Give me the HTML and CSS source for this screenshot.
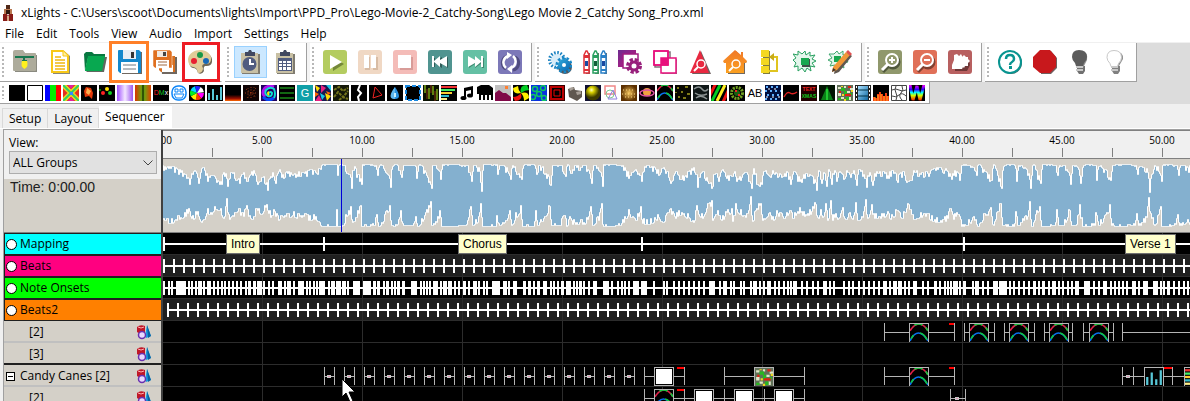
FILE: index.html
```html
<!DOCTYPE html>
<html lang="en">
<head>
<meta charset="utf-8">
<title>xLights</title>
<link rel="stylesheet" href="styles.css">
</head>
<body>
<svg class="defs" aria-hidden="true">
  <defs>
    <linearGradient id="g-purple"><stop offset="0" stop-color="#a050ff"/><stop offset=".5" stop-color="#f4e8ff"/><stop offset="1" stop-color="#9c58f0"/></linearGradient>
    <linearGradient id="g-curtain"><stop offset="0" stop-color="#e03000"/><stop offset=".4" stop-color="#70a010"/><stop offset=".5" stop-color="#103000"/><stop offset=".6" stop-color="#70a010"/><stop offset="1" stop-color="#e04000"/></linearGradient>
    <linearGradient id="g-fire" x2="0" y2="1"><stop offset=".3" stop-color="#000"/><stop offset=".75" stop-color="#a01000"/><stop offset="1" stop-color="#ff6a00"/></linearGradient>
    <linearGradient id="g-rain" x2="0" y2="1"><stop offset="0" stop-color="#f0f"/><stop offset=".3" stop-color="#30f"/><stop offset=".5" stop-color="#0ff"/><stop offset=".7" stop-color="#cf0"/><stop offset="1" stop-color="#f30"/></linearGradient>
    <linearGradient id="g-cog" x2="1" y2="1"><stop offset="0" stop-color="#2fa8d8"/><stop offset="1" stop-color="#0a68b4"/></linearGradient>
    <linearGradient id="g-plum" x2="1" y2="1"><stop offset="0" stop-color="#6c2c90"/><stop offset="1" stop-color="#c8187c"/></linearGradient>
    <linearGradient id="g-house" x2="0" y2="1"><stop offset="0" stop-color="#f07828"/><stop offset="1" stop-color="#fba020"/></linearGradient>
    <radialGradient id="g-ball" cx=".4" cy=".3"><stop offset="0" stop-color="#ffffc0"/><stop offset=".35" stop-color="#d8d000"/><stop offset="1" stop-color="#3c3a00"/></radialGradient>
    <radialGradient id="g-gold"><stop offset="0" stop-color="#f8c860"/><stop offset="1" stop-color="#5c3000"/></radialGradient>
    <linearGradient id="g-film" x2="1" y2="1"><stop offset="0" stop-color="#a8e0ff"/><stop offset="1" stop-color="#1068a0"/></linearGradient>
  </defs>
  <symbol id="fx-off" viewBox="0 0 16 16"><path d="M0 0h16v16H0z"/></symbol>
  <symbol id="fx-on" viewBox="0 0 16 16"><path d="M.5.5h15v15H.5z" fill="#fff" stroke="#000"/></symbol>
  <symbol id="fx-bars" viewBox="0 0 16 16"><path d="M0 0h6v16H0z" fill="#00f"/><path d="M5 0h6v16H5z" fill="#0e0"/><path d="M11 0h5v16h-5z" fill="#f00"/></symbol>
  <symbol id="fx-butterfly" viewBox="0 0 16 16"><path d="M0 0h16v16H0z" fill="#e43020"/><path d="M0 0l16 16M16 0L0 16" stroke="#e8d820" stroke-width="5"/><path d="M0 0l16 16M16 0L0 16" stroke="#30d060" stroke-width="2"/><path d="M5 0h6L8 4zM5 16h6l-3-4z" fill="#e020a0"/><path d="M7 7h3v3H7z" fill="#38f"/></symbol>
  <symbol id="fx-candle" viewBox="0 0 16 16"><path d="M0 0h16v16H0z"/><path d="M5 2l5 1 2 5-1 6-3-3-4 1-1-6z" fill="#e43808"/><path d="M6 3l4 3-2 4-3-2z" fill="#ffb050"/></symbol>
  <symbol id="fx-circles" viewBox="0 0 16 16"><path d="M0 0h16v16H0z"/><circle cx="8" cy="4" r="2" fill="#fd0"/><circle cx="4" cy="8" r="2" fill="#f22"/><circle cx="11" cy="8" r="2" fill="#1c2"/><circle cx="1" cy="5" r="1" fill="#0a0"/></symbol>
  <symbol id="fx-wash" viewBox="0 0 16 16"><path d="M0 0h16v16H0z" fill="url(#g-purple)"/></symbol>
  <symbol id="fx-curtain" viewBox="0 0 16 16"><path d="M0 0h16v16H0z" fill="url(#g-curtain)"/></symbol>
  <symbol id="fx-face" viewBox="0 0 16 16"><rect x="1" y="1" width="14" height="14" rx="6" fill="#fff" stroke="#0a84f8" stroke-width="1.500"/><path d="M4 4h3v3H4zM9 4h3v3H9zM3 9h10l-2 4H5z" fill="none" stroke="#0a84f8"/></symbol>
  <symbol id="fx-fan" viewBox="0 0 16 16"><path d="M0 0h16v16H0z"/><g stroke-width="7" fill="none" stroke-dasharray="3 19"><circle cx="8" cy="8" r="3.500" stroke="#f0f"/><circle cx="8" cy="8" r="3.500" stroke="#f30" stroke-dashoffset="-3"/><circle cx="8" cy="8" r="3.500" stroke="#fe0" stroke-dashoffset="-6"/><circle cx="8" cy="8" r="3.500" stroke="#0e2" stroke-dashoffset="-9"/><circle cx="8" cy="8" r="3.500" stroke="#0df" stroke-dashoffset="-12"/><circle cx="8" cy="8" r="3.500" stroke="#22f" stroke-dashoffset="-15"/><circle cx="8" cy="8" r="3.500" stroke="#fff" stroke-dashoffset="-18"/></g></symbol>
  <symbol id="fx-vu" viewBox="0 0 16 16"><path d="M0 0h16v16H0z"/><path d="M1 8h2v7H1zM5 4h2v11H5zM9 10h2v5H9zM13 2h2v13h-2z" fill="#58c8d8"/></symbol>
  <symbol id="fx-fire" viewBox="0 0 16 16"><path d="M0 0h16v16H0z"/><path d="M0 9l3-2 3 3 3-2 3-1 4 2v7H0z" fill="url(#g-fire)"/></symbol>
  <symbol id="fx-fireworks" viewBox="0 0 16 16"><path d="M0 0h16v16H0z" fill="#100404"/><path d="M8 2v12M3 4l10 8M13 3L4 13M2 8h12" stroke="#a03818" stroke-dasharray="1 1.500"/><path d="M5 3v10M11 2v12" stroke="#683010" stroke-dasharray="1 2"/></symbol>
  <symbol id="fx-galaxy" viewBox="0 0 16 16"><path d="M0 0h16v16H0z" fill="#200060"/><path d="M4 12Q0 8 4 3q4-3 9-1" fill="none" stroke="#b010f0" stroke-width="3"/><path d="M2 12q5 5 11 1" fill="none" stroke="#0448f8" stroke-width="3"/><path d="M8 8q2-2 3 0 0 4-4 3-4-2-2-6 4-4 8-1 2 5 0 9" fill="none" stroke="#0ce0d0" stroke-width="2"/><path d="M8 7q-2 1 0 3" stroke="#fe0" stroke-width="2" fill="none"/></symbol>
  <symbol id="fx-garland" viewBox="0 0 16 16"><path d="M0 0h16v16H0z"/><path d="M1 3h14M1 8h14M1 13h14" stroke="#188818" stroke-width="1.500"/></symbol>
  <symbol id="fx-kaleido" viewBox="0 0 16 16"><path d="M0 0h16v16H0z" fill="#181850"/><path d="M0 0l5 3-3 4zM10 8l6 3-4 5z" fill="#fd0"/><path d="M6 0l5 3-5 5zM0 16l4-6 3 6z" fill="#e82080"/><path d="M11 0h5v6zM5 8l5 3-3 4z" fill="#18c8e8"/><path d="M0 7l4 2-4 3zM11 6l5 2-3 2z" fill="#f60"/></symbol>
  <symbol id="fx-life" viewBox="0 0 16 16"><path d="M0 0h16v16H0z" fill="#141808"/><path d="M1 5l5-3 4 4 5-3M1 12l4-5 5 5 5-6M6 15l4-3 5 2" fill="none" stroke="#74741c" stroke-dasharray="3 1" stroke-width="2"/></symbol>
  <symbol id="fx-lightning" viewBox="0 0 16 16"><path d="M0 0h16v16H0z"/><path d="M9 0L7 5l3 3-3 4 1 4" fill="none" stroke="#fff" stroke-width="2"/></symbol>
  <symbol id="fx-lines" viewBox="0 0 16 16"><path d="M0 0h16v16H0z"/><path d="M6 2l7 8-9 3z" fill="none" stroke="#e22"/></symbol>
  <symbol id="fx-liquid" viewBox="0 0 16 16"><path d="M0 0h16v16H0z"/><path d="M8 2q8 12 0 12T8 2z" fill="#2890e0"/><path d="M8 2q-9 12 0 12z" fill="#60b8f0"/><path d="M8 8v4" stroke="#c8f0ff" stroke-width="2"/></symbol>
  <symbol id="fx-marquee" viewBox="0 0 16 16"><path d="M0 0h16v16H0z" fill="#fff"/><path d="M1 1h14v14H1z" stroke="#1888e0" stroke-width="2" stroke-dasharray="4 2"/></symbol>
  <symbol id="fx-meteor" viewBox="0 0 16 16"><path d="M0 0h16v16H0z" fill="#081000"/><path d="M2 0v8M6 3v11M10 1v9M14 4v11" stroke="#608010" stroke-width="2"/><path d="M4 4v10M8 0v8M12 6v10" stroke="#803010"/></symbol>
  <symbol id="fx-music" viewBox="0 0 16 16"><path d="M0 0h16v16H0z"/><path d="M0 1h16v2H0z" fill="#e33"/><path d="M0 4h14v2H0z" fill="#4e6"/><path d="M0 7h11v2H0z" fill="#fc3"/><path d="M0 10h8v2H0z" fill="#3bc"/><path d="M0 13h6v2H0z" fill="#fe8"/></symbol>
  <symbol id="fx-note" viewBox="0 0 16 16"><path d="M5 3l9-2v9h-2V5L7 6v7H5z"/><ellipse cx="4.500" cy="13" rx="3" ry="2"/><ellipse cx="11" cy="10.500" rx="3" ry="2"/></symbol>
  <symbol id="fx-piano" viewBox="0 0 16 16"><path d="M0 2l4-2h8l4 3v12h-2v-5h-2v5h-2v-5H8v5H6v-5H4v5H2V9H0z"/></symbol>
  <symbol id="fx-picture" viewBox="0 0 16 16"><path d="M0 0h16v16H0z" fill="#c0c0c0"/><path d="M0 8l4-3 4 3 3 0 5 4v4H0z" fill="#800848"/><path d="M10 1h3v3h-3z" fill="#ff8030"/></symbol>
  <symbol id="fx-pinwheel" viewBox="0 0 16 16"><path d="M0 0h16v16H0z"/><path d="M8 8Q0 10 0 3l5-2q0 4 3 7z" fill="#fe0"/><path d="M8 8Q6 0 14 0l2 5q-4 0-8 3z" fill="#0c2"/><path d="M8 8q8-2 8 5l-5 3q0-5-3-8z" fill="#fe0"/><path d="M8 8q2 8-6 8l-2-4q5 0 8-4z" fill="#e11"/></symbol>
  <symbol id="fx-plasma" viewBox="0 0 16 16"><path d="M0 0h16v16H0z" fill="#0830e0"/><g fill="none" stroke="#10c860" stroke-width="1.500"><circle cx="4" cy="4" r="2.500"/><circle cx="12" cy="3" r="2.500"/><circle cx="8" cy="9" r="2.500"/><circle cx="2" cy="12" r="2.500"/><circle cx="13" cy="13" r="2.500"/></g></symbol>
  <symbol id="fx-ripple" viewBox="0 0 16 16"><path d="M0 0h16v16H0z" fill="#300"/><path d="M2 2h12v12H2z" stroke="#b00" stroke-width="2"/><path d="M5 5h6v6H5z" stroke="#e00"/></symbol>
  <symbol id="fx-servo" viewBox="0 0 16 16"><path d="M1 4l6-2 1 3 7 1v6l-5 4-8-4z" fill="#605850"/><path d="M2 3l4-1 1 2-4 2zM9 7l5-1v3l-4 1z" fill="#a8a098"/></symbol>
  <symbol id="fx-ball" viewBox="0 0 16 16"><path d="M0 0h16v16H0z" fill="#101030"/><circle cx="8" cy="8" r="7.500" fill="url(#g-ball)"/></symbol>
  <symbol id="fx-shape" viewBox="0 0 16 16"><path d="M2 1h10v8H2z" fill="none" stroke="#f08888" stroke-width="1.500"/><circle cx="7" cy="9" r="4" fill="none" stroke="#80c890"/><path d="M10 5l4 9H5z" fill="none" stroke="#9080e0"/></symbol>
  <symbol id="fx-shimmer" viewBox="0 0 16 16"><path d="M0 0h16v16H0z" fill="url(#g-gold)"/><path d="M2 5h12M1 9h13M4 12h10" stroke="#ffd880" stroke-dasharray="1 2"/></symbol>
  <symbol id="fx-shock" viewBox="0 0 16 16"><path d="M0 0h16v16H0z" fill="#100008"/><circle cx="8" cy="7" r="4" fill="#f0a040"/><ellipse cx="8" cy="8" rx="7" ry="3" fill="none" stroke="#e050a0" stroke-width="1.500"/></symbol>
  <symbol id="fx-arches" viewBox="0 0 16 16"><path d="M0 0h16v16H0z"/><path d="M0 6Q8-6 16 6" fill="none" stroke="#e02048" stroke-width="1.500"/><path d="M4 1q4-2 7 0M14 3l2 3" fill="none" stroke="#10c840" stroke-width="1.500"/><path d="M0 15Q7 1 16 15" fill="none" stroke="#0870f0" stroke-width="1.500"/><path d="M1 13l2-3M9 8q4 1 6 6" fill="none" stroke="#10c840" stroke-width="1.500"/></symbol>
  <symbol id="fx-snow" viewBox="0 0 16 16"><path d="M0 0h16v16H0z" fill="#080800"/><path d="M2 2h2v2H2zM10 1h3v2h-3zM6 6h2v2H6zM12 8h3v2h-3zM3 11h2v2H3zM8 12h3v2H8zM0 7h2v1H0z" fill="#807c18"/></symbol>
  <symbol id="fx-storm" viewBox="0 0 16 16"><path d="M0 0h16v16H0z" fill="#101818"/><path d="M1 4q5-4 8 0t6 0M2 8q5 4 12 1M3 13q5-4 11 1" fill="none" stroke="#8c9494" stroke-width="1.500"/></symbol>
  <symbol id="fx-spirals" viewBox="0 0 16 16"><path d="M0 0h16v16H0z"/><path d="M1 16L9 0" stroke="#0c2" stroke-width="3"/><path d="M-3 14L5-2M12 17L18 4" stroke="#e11" stroke-width="3"/><path d="M6 16L14 0" stroke="#fe2" stroke-width="3"/></symbol>
  <symbol id="fx-wreath" viewBox="0 0 16 16"><path d="M0 0h16v16H0z"/><circle cx="8" cy="8" r="5.500" fill="none" stroke="#70a020" stroke-width="3" stroke-dasharray="2 1"/><circle cx="8" cy="8" r="3" fill="#186010"/><path d="M6 5h2v2H6zM9 9h2v2H9z" fill="#e22"/></symbol>
  <symbol id="fx-twinkle" viewBox="0 0 16 16"><path d="M0 0h16v16H0z" fill="#001040"/><path d="M1 2h14M0 6h16M2 10h14M0 14h15" stroke="#60b0ff" stroke-width="2" stroke-dasharray="2 3"/><path d="M3 4h12M1 12h14" stroke="#fff" stroke-dasharray="2 4"/></symbol>
  <symbol id="fx-tendril" viewBox="0 0 16 16"><path d="M0 0h16v16H0z"/><path d="M1 12q3-6 6-4t7-1" fill="none" stroke="#d22" stroke-width="1.500"/></symbol>
  <symbol id="fx-tree" viewBox="0 0 16 16"><path d="M0 0h16v16H0z" fill="#021402"/><path d="M8 1l6 14H2z" fill="#0a8018"/><path d="M8 4v11" stroke="#20c830" stroke-width="2"/></symbol>
  <symbol id="fx-confetti" viewBox="0 0 16 16"><path d="M0 0h16v16H0z" fill="#607058"/><path d="M1 2h3v2H1zM7 1h2v2H7zM13 3h3v2h-3zM1 8h3v3H1zM10 6h3v2h-3zM4 12h3v2H4zM12 12h2v3h-2z" fill="#e0e8c8"/><path d="M4 3h4v3H4zM7 6h3v4H7zM1 13h3v2H1zM9 12h3v3H9zM13 8h2v2h-2z" fill="#28b820"/><path d="M8 9h6v2H8zM11 1h3v2h-3zM2 6h2v2H2z" fill="#e02010"/><path d="M4 1h2v1H4zM5 9h2v2H5zM14 5h2v2h-2zM7 14h2v2H7z" fill="#f0d820"/></symbol>
  <symbol id="fx-video" viewBox="0 0 16 16"><path d="M0 0h16v16H0z" fill="#222"/><path d="M3 1h10v14H3z" fill="url(#g-film)"/><path d="M1.500 1v15M14.500 1v15" stroke="#fff" stroke-dasharray="2 2"/><path d="M3 5h10M3 11h10" stroke="#034"/></symbol>
  <symbol id="fx-spectrum" viewBox="0 0 16 16"><path d="M0 0h16v16H0z"/><path d="M0 16v-4h2v1h2v-4h2V7h2v2h2v2h2V8h2v3h2v5z" fill="#f63c10"/><path d="M2 12v4m3-6v6m3-7v7m3-5v5m3-5v5" stroke="#ffb020"/></symbol>
  <symbol id="fx-warp" viewBox="0 0 16 16"><path d="M.5.5h15v15H.5zM1 5q4-2 7 0t7 0M1 11q4 2 7-1t7 1M5 1q-2 4 0 7t0 7M11 1q2 4-1 7t1 7" fill="#fff" stroke="#444"/></symbol>
  <symbol id="fx-wave" viewBox="0 0 16 16"><path d="M0 0h16v16H0z"/><path d="M1 0l3 15L8 1l3 14L15 0" fill="none" stroke="url(#g-rain)" stroke-width="3"/></symbol>
  <symbol id="model" viewBox="0 0 16 16"><path d="M11 1l4 11-5 2-1-2z" fill="#189ce0"/><path d="M11 1l1 13 3-2z" fill="#0860a0"/><path d="M1 3q3-3 8-1v6q-4 3-8 0z" fill="#c01828"/><path d="M2 3q3 2 6 0" stroke="#ffb0b0" fill="none"/><circle cx="6" cy="11" r="3.500" fill="#e8d8ff" stroke="#6830b0" stroke-width="1.500"/></symbol>
</svg>

<header class="titlebar">
  <svg class="app-icon" viewBox="0 0 12 16" aria-hidden="true"><path d="M4 0h4v4H4z" fill="#502818"/><path d="M2 4h8v5H2z" fill="#b87850"/><path d="M4 5h4v4H4z" fill="#301810"/><path d="M1 9h4l1 2 1-2h4v7H1z" fill="#881c18"/><path d="M5 11h2v5H5z" fill="#d8a888"/></svg>
  <h1 class="title">xLights - C:\Users\scoot\Documents\lights\Import\PPD_Pro\Lego-Movie-2_Catchy-Song\Lego Movie 2_Catchy Song_Pro.xml</h1>
</header>

<nav class="menubar">
  <button class="menu">File</button><button class="menu">Edit</button><button class="menu">Tools</button><button class="menu">View</button><button class="menu">Audio</button><button class="menu">Import</button><button class="menu">Settings</button><button class="menu">Help</button>
</nav>

<div class="toolbars">
  <div class="toolrow">
    <div class="toolgroup open">
      <button class="tool" aria-label="Show folder"><svg viewBox="0 0 24 24"><path d="M2 2h9l2 3h11v17H2z" fill="#8a8a80"/><path d="M0 2q0-2 2-2h8l2 3h10q1 0 1 1v16q0 1-1 1H1q-1 0-1-1z" fill="#adab9b"/><path d="M2 7h19M11 7v3" stroke="#187850" stroke-width="2"/><path d="M9 10h5v2H9z" fill="#187850"/><path d="M9 11h5q2 5-2.500 8Q7 16 9 11z" fill="#fff020"/></svg></button>
      <button class="tool" aria-label="New sequence"><svg viewBox="0 0 24 24"><path d="M5 1h11l6 5v18H5z" fill="#8a8878"/><path d="M4 1h11l5 5v16H4z" fill="#fff" stroke="#f8c818" stroke-width="2"/><path d="M15 1v5h5" fill="#fff0a0" stroke="#f8c818"/><path d="M7 7h6M7 10h10M7 13h10M7 16h10M7 19h10" stroke="#f0b810" stroke-width="1.500"/></svg></button>
      <button class="tool" aria-label="Open sequence"><svg viewBox="0 0 24 24"><path d="M1 4l2-2h6l2 2h11v4H5L2 21z" fill="#087840"/><path d="M3 21L6 7h18l-3 15H4z" fill="#606860"/><path d="M2 20L5 6h17l-3 15H2z" fill="#08a850"/></svg></button>
      <button class="tool" aria-label="Save"><svg viewBox="0 0 24 24"><path d="M2 2h22v22H4z" fill="#706860"/><path d="M0 1q0-1 1-1h20l2 2v20q0 1-1 1H2l-2-2z" fill="#1488cc"/><path d="M5 0h13v9H5z" fill="#e8eef4"/><path d="M13 2h3v6h-3z" fill="#333"/><path d="M3 12h17v11H3z" fill="#fff"/><path d="M5 15h13M5 19h13" stroke="#707880"/></svg><span class="mark mark-orange"></span></button>
      <button class="tool" aria-label="Save as"><svg viewBox="0 0 24 24"><path d="M7 7h17v17H9z" fill="#706860"/><path d="M6 6h16v16H8l-2-2z" fill="#d87020"/><path d="M9 15h11v7H9z" fill="#fff"/><path d="M0 1q0-1 1-1h16l2 2v16H2l-2-2z" fill="#e07020" stroke="#fff" stroke-width=".5"/><path d="M4 1h10v6H4z" fill="#f0e8e0"/><path d="M10 2h3v4h-3z" fill="#444"/><path d="M3 10h13v8H3z" fill="#fff"/><path d="M5 12h9M5 15h9" stroke="#a06840"/></svg></button>
      <button class="tool" aria-label="Color palette"><svg viewBox="0 0 24 24"><path d="M1 10C3 0 22-1 24 9q1 8-7 7-2 1-1 5-2 4-6 2-1-5-5-5-4-1-4-8z" fill="#706858"/><path d="M0 9C2-2 20-3 23 7q1 8-7 7-3 1-1 4 0 5-5 5-1-6-5-6-5-1-5-8z" fill="#e0cc98"/><circle cx="12" cy="5" r="3" fill="#189848"/><circle cx="6" cy="11" r="3" fill="#e82030"/><circle cx="18" cy="11" r="3" fill="#1868b8"/></svg><span class="mark mark-red"></span></button>
    </div>
    <div class="toolgroup">
      <button class="tool pressed" aria-label="Clock view"><svg viewBox="0 0 24 24"><path d="M4 4h18v20H4z" fill="#807c70"/><path d="M3 3h17v20H3z" fill="#c8c0a4"/><path d="M7 2h3l1-2h2l1 2h3v4H7z" fill="#404860"/><circle cx="11.500" cy="14" r="7" fill="#505c80"/><path d="M12 9v5h4" stroke="#fff" stroke-width="2" fill="none"/></svg></button>
      <button class="tool" aria-label="Calendar view"><svg viewBox="0 0 24 24"><path d="M4 4h18v20H4z" fill="#807c70"/><path d="M3 3h17v20H3z" fill="#c8c0a4"/><path d="M7 2h3l1-2h2l1 2h3v4H7z" fill="#404860"/><path d="M5 8h14v13H5z" fill="#505c80"/><path d="M6 11h3v2H6zM10 11h3v2h-3zM14 11h4v2h-4zM6 14h3v2H6zM10 14h3v2h-3zM14 14h4v2h-4zM6 17h3v3H6zM10 17h3v3h-3zM14 17h4v3h-4z" fill="#fff"/></svg></button>
    </div>
    <div class="toolgroup">
      <button class="tool" aria-label="Play"><svg viewBox="0 0 24 24"><rect width="24" height="24" rx="3" fill="#b4cc60"/><path d="M9 7l12 7-11 7z" fill="#748838"/><path d="M7 5l12 7-12 7z" fill="#fff"/></svg></button>
      <button class="tool" aria-label="Pause"><svg viewBox="0 0 24 24"><rect width="24" height="24" rx="3" fill="#f0d8c4"/><path d="M7 7h5v13H7zM15 7h5v13h-5z" fill="#d8bca4"/><path d="M6 5h5v13H6zM13 5h5v13h-5z" fill="#fff"/></svg></button>
      <button class="tool" aria-label="Stop"><svg viewBox="0 0 24 24"><rect width="24" height="24" rx="3" fill="#f4bcb8"/><path d="M7 7h13v13H7z" fill="#d89c98"/><path d="M5 5h13v13H5z" fill="#fff"/></svg></button>
      <button class="tool" aria-label="Rewind"><svg viewBox="0 0 24 24"><rect width="24" height="24" rx="3" fill="#509490"/><path d="M5 8h2v4l7-5v4l6-4v11l-6-4v4l-7-5v4H5z" fill="#305c58"/><path d="M4 6h2v5l6-5v4l7-4v11l-7-4v4l-6-5v5H4z" fill="#fff"/></svg></button>
      <button class="tool" aria-label="Forward"><svg viewBox="0 0 24 24"><rect width="24" height="24" rx="3" fill="#64c0a4"/><path d="M21 8h-2v4l-7-5v4L6 7v11l6-4v4l7-5v5h2z" fill="#408870"/><path d="M20 6h-2v5l-6-5v4L5 6v11l7-4v4l6-5v5h2z" fill="#fff"/></svg></button>
      <button class="tool" aria-label="Loop"><svg viewBox="0 0 24 24"><rect width="24" height="24" rx="3" fill="#7c78b8"/><g fill="none" stroke="#504c80" stroke-width="3"><path d="M8 19a7 7 0 0 1 2-13M17 7a7 7 0 0 1-2 13"/></g><g fill="none" stroke="#fff" stroke-width="2.500"><path d="M8 18a7 7 0 0 1 2-12M15 6a7 7 0 0 1-2 12"/></g><path d="M9 2l5 3-5 4zM14 15l-5 4 5 4z" fill="#fff"/></svg></button>
    </div>
    <div class="toolgroup">
      <button class="tool" aria-label="Settings"><svg viewBox="0 0 24 24"><circle cx="9" cy="10" r="7" fill="none" stroke="#1880c0" stroke-width="4" stroke-dasharray="1.500 1.500"/><circle cx="9" cy="10" r="6" fill="#d8ecf8"/><circle cx="17" cy="17" r="7" fill="#505860"/><circle cx="16" cy="15" r="7" fill="none" stroke="#1888c8" stroke-width="3" stroke-dasharray="2.500 1.900"/><circle cx="16" cy="15" r="6" fill="url(#g-cog)"/><circle cx="16" cy="15" r="2" fill="#fff"/></svg></button>
      <button class="tool" aria-label="Crayons"><svg viewBox="0 0 24 24"><path d="M3 3h4v21H3zM12 3h4v21h-4zM21 3h3v21h-3z" fill="#706c68"/><g fill="#fff" stroke-width="1.500"><path d="M1 5l2-4 1 0 2 4v18H1z" stroke="#e03038"/><path d="M10 5l2-4 1 0 2 4v18h-5z" stroke="#28a060"/><path d="M18 5l2-4 1 0 2 4v18h-5z" stroke="#2880c8"/></g><path d="M1 5h5v3H1zM1 19h5v2H1z" fill="#e03038"/><path d="M10 5h5v3h-5zM10 19h5v2h-5z" fill="#28a060"/><path d="M18 5h5v3h-5zM18 19h5v2h-5z" fill="#2880c8"/><path d="M2 11h3v5H2z" fill="#1848a0"/><path d="M11 11h3v5h-3z" fill="#106038"/><path d="M19 11h3v5h-3z" fill="#1848a0"/></svg></button>
      <button class="tool" aria-label="Layer settings"><svg viewBox="0 0 24 24"><path d="M0 0h18v17H0z" fill="url(#g-plum)"/><path d="M5 4h15v14H5z" fill="#fff" stroke="#a01c80" stroke-width="1.500"/><circle cx="16" cy="16" r="6" fill="none" stroke="#98207c" stroke-width="4" stroke-dasharray="3 1.700"/><circle cx="16" cy="16" r="4" fill="#fff" stroke="#98207c" stroke-width="3"/></svg></button>
      <button class="tool" aria-label="Overlap"><svg viewBox="0 0 24 24"><path d="M2 2h15v15H2zM10 10h14v14H10z" fill="none" stroke="#807078" stroke-width="1.500"/><path d="M1 1h14v14H1zM8 8h15v15H8z" fill="#fff" stroke="#e8107c" stroke-width="1.500"/><path d="M1 1h14v14H1z" fill="none" stroke="#e8107c" stroke-width="1.500"/><path d="M8 8h7v7H8z" fill="#e8107c"/></svg></button>
      <button class="tool" aria-label="Inspect model"><svg viewBox="0 0 24 24"><path d="M13 1l10 23H4z" fill="#706060"/><path d="M12 0l9 23H2z" fill="#e82840"/><circle cx="13" cy="14" r="4" fill="none" stroke="#fff" stroke-width="1.500"/><path d="M10 17l-4 4" stroke="#fff" stroke-width="2"/></svg></button>
      <button class="tool" aria-label="House preview"><svg viewBox="0 0 24 24"><path d="M13 1l11 11-2 1v11H5V13z" fill="#706860"/><path d="M12 0l6 5V2h2v5l4 4-1 2h-2v10H3V13H1l-1-2z" fill="url(#g-house)"/><circle cx="13" cy="14" r="4" fill="none" stroke="#fff" stroke-width="1.500"/><path d="M10 17l-4 4" stroke="#fff" stroke-width="2"/></svg></button>
      <button class="tool" aria-label="Model blocks"><svg viewBox="0 0 24 24"><path d="M5 1h7v23H5z" fill="#807c40"/><path d="M3 0h8v7H3zM3 8h8v7H3zM3 16h8v7H3z" fill="#f4d820"/><path d="M11 21h8V7h-5" fill="none" stroke="#e0c420" stroke-width="2"/><path d="M16 3l-5 4 5 4z" fill="#c8ac18"/></svg></button>
      <button class="tool" aria-label="Effects"><svg viewBox="0 0 24 24"><path d="M12 1l1 4 4-3 0 4 5-1-3 4 4 2-4 2 3 4-5-1 1 5-4-3-2 4-3-4-4 3 0-5-4 1 2-4-3-3 3-2-3-4 5 1 0-4 4 3z" fill="#e4f6ec" stroke="#28a060"/><path d="M9 9h8v8H9z" fill="#405048"/><path d="M8 8h8v7H8z" fill="#18a850"/></svg></button>
      <button class="tool" aria-label="Edit effects"><svg viewBox="0 0 24 24"><path d="M9 1l2 3 4-3 0 4 5-1-2 5 2 3-5 1 1 5-5-3-3 4-1-4-5 1 2-4-4-2 4-2-3-4 5 0z" fill="#e4f6ec" stroke="#40a870"/><path d="M6 6h7v6H6z" fill="#18a850"/><path d="M6 24l1-6L20 3l4 3L11 22z" fill="#605850"/><path d="M4 22l1-5L18 2l4 3L9 20z" fill="#f09838"/><path d="M18 2l2-2 4 4-2 2z" fill="#e05050"/><path d="M4 22l1-4 3 2z" fill="#403028"/></svg></button>
    </div>
    <div class="toolgroup">
      <button class="tool" aria-label="Zoom in"><svg viewBox="0 0 24 24"><rect width="24" height="24" rx="3" fill="#90986c"/><circle cx="15" cy="12" r="6" fill="none" stroke="#50583c" stroke-width="3"/><path d="M11 16l-6 6" stroke="#50583c" stroke-width="3"/><circle cx="14" cy="10" r="6" fill="#90986c" stroke="#fff" stroke-width="2"/><path d="M10 14l-6 6" stroke="#fff" stroke-width="3"/><path d="M14 7v6M11 10h6" stroke="#fff" stroke-width="2"/></svg></button>
      <button class="tool" aria-label="Zoom out"><svg viewBox="0 0 24 24"><rect width="24" height="24" rx="3" fill="#e07058"/><circle cx="15" cy="12" r="6" fill="none" stroke="#804030" stroke-width="3"/><path d="M11 16l-6 6" stroke="#804030" stroke-width="3"/><circle cx="14" cy="10" r="6" fill="#e07058" stroke="#fff" stroke-width="2"/><path d="M10 14l-6 6" stroke="#fff" stroke-width="3"/><path d="M11 10h6" stroke="#fff" stroke-width="2"/></svg></button>
      <button class="tool" aria-label="Sparkle"><svg viewBox="0 0 24 24"><rect width="24" height="24" rx="3" fill="#b86060"/><path d="M7 8l5-3 4 4 5 1 1 5-3 6H7z" fill="#703838"/><path d="M6 5l3-1 2 2 2-2 2 4v9l-1 2H4l0-4 2-5z" fill="#fff"/><path d="M14 7l2-2 2 2 2 0 0 2 2 2-2 2 0 3-3 0-1 2-2-2z" fill="#fff"/></svg></button>
    </div>
    <div class="toolgroup">
      <button class="tool" aria-label="Help"><svg viewBox="0 0 24 24"><circle cx="13" cy="13" r="11" fill="#506868"/><circle cx="12" cy="12" r="11" fill="#fff" stroke="#089490" stroke-width="2"/><path d="M8 9q0-4 4-4t4 4q0 2-2 3t-2 3" fill="none" stroke="#089490" stroke-width="2.500"/><path d="M11 16h3v3h-3z" fill="#089490"/></svg></button>
      <button class="tool" aria-label="Stop output"><svg viewBox="0 0 24 24"><path d="M8 1h10l6 7v10l-6 6H8z" fill="#706060"/><path d="M7 0h10l6 7v10l-6 6H7l-7-6V7z" fill="#c8181c"/></svg></button>
      <button class="tool" aria-label="Lights off"><svg viewBox="0 0 24 24"><path d="M9 16h8v5l-2 3h-4l-2-3z" fill="#707070"/><path d="M12 1q9 1 7 9l-4 8h-4z" fill="#909090"/><path d="M11 0q8 0 8 7 0 3-3 6l-1 3H8l-1-3q-3-3-3-6 0-7 7-7z" fill="#5c5c5c"/><path d="M8 17h7M8 20h7" stroke="#c8c8c8" stroke-width="2"/></svg></button>
      <button class="tool" aria-label="Lights on"><svg viewBox="0 0 24 24"><path d="M9 16h8v5l-2 3h-4l-2-3z" fill="#808080"/><path d="M12 1q9 1 8 8l-4 7h-4z" fill="#909090"/><path d="M11 .5q7.500 0 7.500 7 0 3-3 6l-1 3H8l-1-3q-3-3-3-6 0-7 7-7z" fill="#fff" stroke="#c8c8c8"/><path d="M8 17h7M8 20h7" stroke="#c8c8c8" stroke-width="2"/></svg></button>
    </div>
  </div>
  <div class="toolrow">
    <div class="effectbar" id="effects"></div>
  </div>
</div>

<div class="tabs" role="tablist">
  <button class="tab" role="tab">Setup</button><button class="tab" role="tab">Layout</button><button class="tab active" role="tab" aria-selected="true">Sequencer</button>
</div>

<main class="sequencer">
  <aside class="side">
    <div class="viewbox">
      <label class="caption" for="view">View:</label>
      <div class="picker">
        <select id="view" class="select"><option>ALL Groups</option></select>
        <svg class="chevron" viewBox="0 0 10 6" aria-hidden="true"><path d="M.5.5L5 5 9.500.5" fill="none" stroke="#444"/></svg>
      </div>
    </div>
    <div class="time">Time: 0:00.00</div>
    <label class="row timing cyan"><input type="radio" name="timing" class="dot">Mapping</label>
    <label class="row timing pink"><input type="radio" name="timing" class="dot">Beats</label>
    <label class="row timing green"><input type="radio" name="timing" class="dot">Note Onsets</label>
    <label class="row timing orange"><input type="radio" name="timing" class="dot">Beats2</label>
    <div class="row layer"><span class="name">[2]</span><svg class="model"><use href="#model"/></svg></div>
    <div class="row layer last"><span class="name">[3]</span><svg class="model"><use href="#model"/></svg></div>
    <div class="row layer"><button class="collapse" aria-label="Collapse"></button><span class="name top">Candy Canes [2]</span><svg class="model"><use href="#model"/></svg></div>
    <div class="row layer"><span class="name">[2]</span><svg class="model"><use href="#model"/></svg></div>
  </aside>
  <section class="timeline">
    <svg class="ruler" id="ruler"></svg>
    <svg class="wave" id="wave"></svg>
    <div class="lane" id="mapping"><svg class="track"></svg></div>
    <div class="lane alt" id="beats"><svg class="track"></svg></div>
    <div class="lane" id="onsets"><svg class="track"></svg></div>
    <div class="lane alt" id="beats2"><svg class="track"></svg></div>
    <div class="lane" id="layer2"><svg class="track"></svg></div>
    <div class="lane" id="layer3"><svg class="track"></svg></div>
    <div class="lane" id="candy"><svg class="track"></svg></div>
    <div class="lane" id="candy2"><svg class="track"></svg></div>
    <svg class="cursor" viewBox="0 0 14 24" aria-hidden="true"><path d="M1 0v18l4-4 4 9 3-1-4-9h6z" fill="#fff" stroke="#000"/></svg>
  </section>
</main>
<script src="script.js"></script>
</body>
</html>
```

FILE: styles.css
```css
* { box-sizing: border-box; }
body {
  margin: 0;
  height: 100vh;
  overflow: hidden;
  background: #f0f0f0;
  color: #000;
  font: 12px/16px "Open Sans", "Noto Sans", sans-serif;
}
button { font: inherit; color: inherit; border: 0; padding: 0; margin: 0; background: none; }
svg { display: block; }
.defs { position: absolute; width: 0; height: 0; }

.titlebar { display: flex; align-items: center; gap: 7px; height: 25px; padding-left: 2px; background: #fff; }
.app-icon { width: 12px; height: 16px; }
.title { margin: 0; font-size: 12px; font-weight: 400; white-space: nowrap; }
.menubar { display: flex; gap: 12px; height: 18px; padding-left: 5px; background: #fff; border-bottom: 1px solid #f0f0f0; }
.menu { line-height: 16px; }

.toolbars { background: #dcdcdc; height: 61px; }
.toolrow { display: flex; }
.toolgroup { display: flex; align-items: center; height: 39px; margin-right: 3px; padding: 0 3px 1px 8px; background: #fff; border-right: 1px solid #a0a0a0; border-bottom: 1px solid #a0a0a0; position: relative; box-shadow: 3px 0 #f4f4f4; }
.toolgroup:last-child { box-shadow: none; }
.toolgroup.open { border-right-color: #fff; box-shadow: 3px 0 #fff; }
.toolgroup::before, .effectbar::before { content: ""; position: absolute; left: 2px; top: 4px; bottom: 4px; width: 2px; background: repeating-linear-gradient(#b8b8b8 0 2px, transparent 2px 4px); }
.tool { position: relative; flex: none; width: 35px; height: 32px; padding: 4px 6px 4px 5px; }
.tool svg { width: 24px; height: 24px; }
.pressed { width: 33px; margin-left: 1px; margin-right: 1px; padding: 3px 5px 3px 3px; background: #cce8ff; border: 1px solid #99d1ff; }
.mark { position: absolute; inset: -5px -1px -5px -4px; border: 3px solid #ff7f27; z-index: 1; }
.mark-red { inset: -4px -2px -4px -1px; border-color: #ed1c24; }
.effectbar { position: relative; display: flex; gap: 2px; height: 22px; padding: 3px 4px 0 9px; background: #fff; border-right: 1px solid #a0a0a0; border-bottom: 1px solid #a0a0a0; }
.effect, .effect svg { width: 16px; height: 16px; }
.text-icon { display: grid; align-content: center; justify-content: center; height: 16px; font: 11px/14px "Liberation Sans", sans-serif; text-align: center; white-space: nowrap; }
.text-icon.sign { background: #200000; font: bold 5px/7px "Liberation Sans", sans-serif; }
.text-icon.channels { background: #000; grid-auto-flow: column; font: 7px/12px "Liberation Sans", sans-serif; }
.text-icon.badge { background: #10a0a8; color: #fff; }
.red { color: #f02020; }
.lime { color: #10c820; }
.white { color: #fff; }

.tabs { display: flex; align-items: flex-end; height: 25px; padding-left: 2px; border-bottom: 1px solid #fff; }
.tab { height: 20px; padding: 0 6px; border: 1px solid #d9d9d9; border-bottom: 0; border-left-width: 0; }
.tab:first-child { border-left-width: 1px; }
.tab.active { height: 23px; padding-bottom: 2px; background: #fff; margin-bottom: -1px; border-color: #fff; }

.sequencer { display: flex; margin-left: 3px; border-left: 1px solid #a0a0a0; border-top: 1px solid #a0a0a0; }
.side { width: 159px; flex: none; border-right: 2px solid #404040; background: #d4d0c8; }
.viewbox { height: 49px; padding: 5px 4px 0 5px; background: #f0f0f0; }
.caption { display: block; }
.picker { position: relative; height: 23px; }
.select { width: 100%; height: 23px; padding: 0 3px; appearance: none; border: 1px solid #adadad; border-radius: 0; background: #e1e1e1; font: inherit; color: inherit; }
.chevron { position: absolute; right: 4px; top: 9px; width: 10px; height: 6px; }
.time { height: 54px; padding-left: 6px; font: 14px/16px "Liberation Sans", sans-serif; color: #202020; border-bottom: 1px solid #808080; }
.row { display: flex; align-items: center; height: 22px; }
.timing { border: 1px solid #202020; border-width: 1px 0 1px 1px; }
.cyan { background: #00ffff; }
.pink { background: #ff0080; }
.green { background: #00ff00; }
.orange { background: #ff8000; }
.dot { appearance: none; flex: none; width: 11px; height: 11px; margin: 0 3px 0 1px; border: 1px solid #000; border-radius: 50%; background: #fff; }
.layer { padding: 2px 9px 0 0; border-bottom: 2px solid #c0c0c0; }
.layer.last { border-color: #202020; }
.name { flex: 1; padding-left: 25px; }
.name.top { padding-left: 5px; }
.collapse { width: 9px; height: 9px; margin-left: 2px; border: 1px solid #000; background: linear-gradient(#000, #000) center / 5px 1px no-repeat #fff; }
.model { width: 16px; height: 16px; }

.timeline { position: relative; flex: 1; min-width: 0; border-top: 1px solid #808080; background: #000; }
.ruler { width: 100%; height: 28px; background: #f0f0f0; border-bottom: 1px solid #808080; }
.ruler text { font-size: 10px; text-anchor: middle; }
.ruler rect { fill: #808080; }
.wave { width: 100%; height: 74px; background: #d4d0c8; border-bottom: 1px solid #808080; }
.envelope { fill: #84b0cf; stroke: #fff; stroke-width: 1; }
.playhead { fill: #0000d8; }
.lane { position: relative; height: 22px; background: #000; border-bottom: 1px solid #2c2c2c; overflow: hidden; }
.lane.alt { background: #202020; }
.track { width: 100%; height: 22px; }
.grid { fill: #2c2c2c; }
.beat { fill: #fff; }
.bracket { fill: #b4b4b4; }
.flag { fill: #f00; }
.frame { fill: #fff; stroke: #b4b4b4; }
.inner { fill: #fff; stroke: #000; }
.bead { fill: #e090b0; stroke: #c8c8c8; }
.tag { position: absolute; top: 1px; height: 20px; padding: 0 4px; border: 1px solid #707070; background: #ffffcc; font: 12px/18px "Liberation Sans", sans-serif; }
.cursor { position: absolute; left: 178px; top: 248px; width: 14px; height: 24px; }
```

FILE: script.js
```js
const ORIGIN = 163;      // left edge of the timeline
const PER_MARK = 50;     // pixels for 2.5 seconds
const END = 2400;
const NS = 'http://www.w3.org/2000/svg';

function add(parent, tag, attrs, text) {
  const el = document.createElementNS(NS, tag);
  for (const k in attrs) el.setAttribute(k, attrs[k]);
  if (text) el.textContent = text;
  parent.appendChild(el);
  return el;
}
function rect(parent, cls, x, y, width, height) {
  return add(parent, 'rect', { class: cls, x: x - ORIGIN, y, width, height });
}
function icon(parent, name, x, y, size) {
  add(parent, 'use', { href: '#fx-' + name, x: x - ORIGIN, y, width: size, height: size });
}
const track = id => document.querySelector('#' + id + ' .track');

// Effect palette
const effects = ('off on bars butterfly candle circles wash curtain dmx face fan vu fire fireworks galaxy garland gled ' +
  'kaleido life lightning lines liquid marquee meteor music note piano picture pinwheel plasma ripple servo ball shape ' +
  'shimmer shock arches snow storm spirals wreath text twinkle tendril xmas tree confetti video spectrum warp wave').split(' ');
const lettered = {
  text: '<span class="text-icon">AB</span>',
  xmas: '<span class="text-icon sign"><span class="red">TEXT</span><span class="lime">XMAS</span></span>',
  dmx: '<span class="text-icon channels"><span class="red">D</span><span class="lime">M</span><span class="white">x</span></span>',
  gled: '<span class="text-icon badge">G</span>'
};
const bar = document.getElementById('effects');
for (const name of effects) {
  const b = document.createElement('button');
  b.className = 'effect';
  b.setAttribute('aria-label', name);
  if (lettered[name]) b.innerHTML = lettered[name];
  else add(add(b, 'svg', {}), 'use', { href: '#fx-' + name });
  bar.appendChild(b);
}

// Ruler
const ruler = document.getElementById('ruler');
for (let i = 0; i * PER_MARK < END; i++) {
  const x = 162 + i * PER_MARK;
  rect(ruler, '', x, 17, 1, 9);
  if (i % 2 === 0) add(ruler, 'text', { x: x - ORIGIN, y: 13 }, (i * 2.5).toFixed(2));
}

// Waveform: [x, top] points; the lower edge mirrors the upper one
const points = [
  163,166,166,168,172,167,178,170,185,173,190,180,193,170,199,179,203,168,208,177,213,176,217,181,222,180,225,172,228,187,231,171,236,176,240,182,
  243,173,248,180,253,171,258,180,262,176,268,186,272,173,276,179,279,170,283,175,288,172,294,175,299,172,305,174,311,170,317,172,321,168,323,164,
  337,164,338,176,339,164,345,165,347,174,351,176,352,184,354,166,357,173,360,177,362,185,363,164,376,165,378,176,380,164,387,174,391,183,393,165,
  397,164,402,178,404,165,415,165,417,174,419,164,427,176,432,187,433,165,438,168,441,178,443,164,467,165,472,182,474,165,478,167,482,187,484,164,
  497,164,498,175,500,165,506,168,511,180,513,165,517,173,522,180,524,164,535,164,537,175,539,165,547,174,551,184,553,165,562,165,564,172,566,175,
  568,164,572,172,574,166,586,166,592,184,594,165,598,168,603,182,604,164,622,165,627,172,630,176,634,172,637,170,640,174,642,182,644,167,648,166,655,168,
  660,173,664,168,672,182,675,172,680,175,685,177,690,171,695,168,698,183,703,172,708,182,713,185,714,170,719,180,723,170,728,176,733,177,734,169,737,182,743,175,
  746,173,752,189,754,169,757,180,762,185,764,170,768,173,771,178,774,169,778,178,783,172,786,172,791,180,794,172,798,177,803,179,805,174,811,176,817,186,819,171,
  822,179,825,172,827,187,829,170,832,185,834,170,837,177,840,170,844,178,847,171,851,178,854,171,857,186,859,170,864,173,867,186,869,172,873,186,875,172,884,172,
  888,176,892,171,898,178,903,172,908,182,912,181,914,171,922,173,930,172,938,168,946,169,952,180,954,171,960,176,963,164,977,171,979,164,985,172,992,181,994,164,
  998,176,1002,187,1004,165,1015,164,1017,177,1019,165,1027,170,1031,187,1033,164,1038,175,1041,184,1043,164,1056,165,1058,176,1060,165,1064,165,1071,180,1073,165,
  1077,165,1081,184,1084,164,1096,165,1097,176,1100,165,1105,170,1111,181,1113,165,1121,164,1136,165,1138,175,1140,165,1146,168,1150,188,1153,172,1156,165,1160,174,
  1162,182,1163,164,1176,165,1179,176,1181,165,1187,167,1190,175
];
function topAt(x) {
  const shift = ((x - 163) % 1027) + 163;
  let i = 0;
  while (i < points.length - 4 && points[i + 2] < shift) i += 2;
  const [x0, y0, x1, y1] = points.slice(i, i + 4);
  const t = Math.max(0, Math.min(1, (shift - x0) / (x1 - x0)));
  // leave a dip fast and enter it late, so that dips stay narrow
  return y0 + (y1 - y0) * (y1 > y0 ? t * t : Math.sqrt(t));
}
const wave = document.getElementById('wave');
const jitter = x => Math.abs(Math.sin(x * 12.9898) * 43758.5453) % 1;
let upper = 'M-1 36', lower = '';
for (let x = 0; x < END; x++) {
  const y = Math.round(topAt(x + ORIGIN)) - 159;
  const a = jitter(x), b = jitter(x + 977);
  const up = y < 7 ? y + (a > .8 ? 1 : 0) : y + (a > .75 ? 4 : a > .5 ? 1 : -1);
  const down = 72 - (y < 7 ? y + (b > .85 ? 2 : 0) : y + (b > .75 ? 5 : b > .5 ? 2 : 0));
  upper += `V${up + .5}H${x + .5}`;
  lower = `H${x - .5}V${down + .5}` + lower;
}
add(wave, 'path', { class: 'envelope', d: upper + lower + 'Z' });
rect(wave, 'playhead', 341, 0, 1, 73);

// Grid lines behind every lane
for (const svg of document.querySelectorAll('.track')) {
  for (let x = 262; x < END; x += 100) rect(svg, 'grid', x, 0, 1, 22);
}

// Timing lanes
function line(svg, from) { rect(svg, 'beat', from, 10, END, 2); }
const mapping = track('mapping');
line(mapping, 163);
for (const x of [163, 323, 641, 963]) rect(mapping, 'beat', x, 4, 2, 14);
for (const [x, text] of [[226, 'Intro'], [458, 'Chorus'], [1125, 'Verse 1']]) {
  const tag = document.createElement('span');
  tag.className = 'tag';
  tag.textContent = text;
  tag.style.left = (x - ORIGIN) + 'px';
  mapping.parentNode.appendChild(tag);
}
for (const [id, start] of [['beats', 163], ['beats2', 167]]) {
  line(track(id), start);
  for (let x = start; x < END; x += 10) rect(track(id), 'beat', x, 4, 2, 14);
}
const onsets = track('onsets');
line(onsets, 163);
const blocks = '163 168 171 176-186 188 191 195 198-202 203 207-211 213 217 221 224 228 232 236 240 245 248-251 253-256 257-262 263 268 272 ' +
  '278-282 284 287-291 293 298-304 306 309 313 316-318 319-325 328 331 333-335 336-341 342-346 347 353-360 363-371 373-376 377-380 383-385 ' +
  '386-389 391 394 397-400 402-405 411-417 420 423 426 429 433-438 440 443-447 448-452 454 458 463-466 468 473-477 478 483 486 492-500 503-507 ' +
  '508 513-517 523-526 528-531 533 537-540 543-547 550 553 557 561-564 566-571 573 576 579-582 583 588 593-597 603-609 611 617 621 624 628 ' +
  '633-639 641-647 653 663 666 673 678 683 688 693 698 703 709-715 719 723-727 730 733 740 743 750 753-757 759 763 767-771 774 778 783 787 790 ' +
  '793-797 801 806 812 817 823-827 829 833 843 848 852 858 863 868 873 878 883-887 889 893-897 898-902 904 908 913-917 922 927 934-937 939 944 ' +
  '947 950 953-958 959 963-966 972 975 977 982 987 993-998 999-1007 1009 1013 1018 1023 1028 1033-1036 1038 1042-1045 1048 1052-1056 1058 1062 ' +
  '1067 1071 1075-1079 1084-1090 1093 1098 1103-1107 1110 1114 1118 1122 1126 1132-1136 1138 1143-1148 1153-1158 1160 1163 1167-1170 1173 1178 1183 1187';
for (const item of blocks.split(' ')) {
  const [a, b] = item.split('-').map(Number);
  rect(onsets, 'beat', a, 4, b ? b - a : 2, 14);
}

// Effect lanes
function block(svg, from, to, name, at, flagged) {
  rect(svg, 'bracket', from, 2, 1, 18);
  rect(svg, 'bracket', to, 2, 1, 18);
  rect(svg, 'bracket', from, 11, to - from, 1);
  if (flagged) rect(svg, 'flag', flagged, 2, to - flagged, 2);
  if (name === 'bead') {
    add(svg, 'rect', { class: 'bead', x: at - ORIGIN - 1.5, y: 10.5, width: 3, height: 2 });
  } else if (name) {
    add(svg, 'rect', { class: 'frame', x: at - ORIGIN + .5, y: 2.5, width: 19, height: 18 });
    if (name !== 'on') icon(svg, name, at + 1, 3, 18);
    else add(svg, 'rect', { class: 'inner', x: at - ORIGIN + 1.5, y: 3.5, width: 17, height: 16 });
  }
}
const layer2 = track('layer2');
block(layer2, 884, 954, 'arches', 909, 949);
block(layer2, 964, 994, 'arches', 969);
block(layer2, 1004, 1034, 'arches', 1009);
block(layer2, 1044, 1072, 'arches', 1049);
block(layer2, 1083, 1113, 'arches', 1089);
block(layer2, 1122, 1240);
const candy = track('candy');
for (let x = 324; x < 640; x += 20) block(candy, x, x + 10, 'bead', x + 5);
block(candy, 644, 684, 'on', 654, 677);
block(candy, 724, 804, 'confetti', 754);
block(candy, 884, 954, 'arches', 909, 949);
block(candy, 1122, 1133, 'bead', 1128);
block(candy, 1133, 1172, 'vu', 1144, 1163);
block(candy, 1172, 1240, 'music', 1184);
const candy2 = track('candy2');
block(candy2, 644, 684, 'arches', 654, 677);
block(candy2, 684, 724, 'on', 694);
block(candy2, 724, 764, 'on', 734);
block(candy2, 764, 804, 'on', 774);
block(candy2, 950, 965, 'bead', 957);
```
